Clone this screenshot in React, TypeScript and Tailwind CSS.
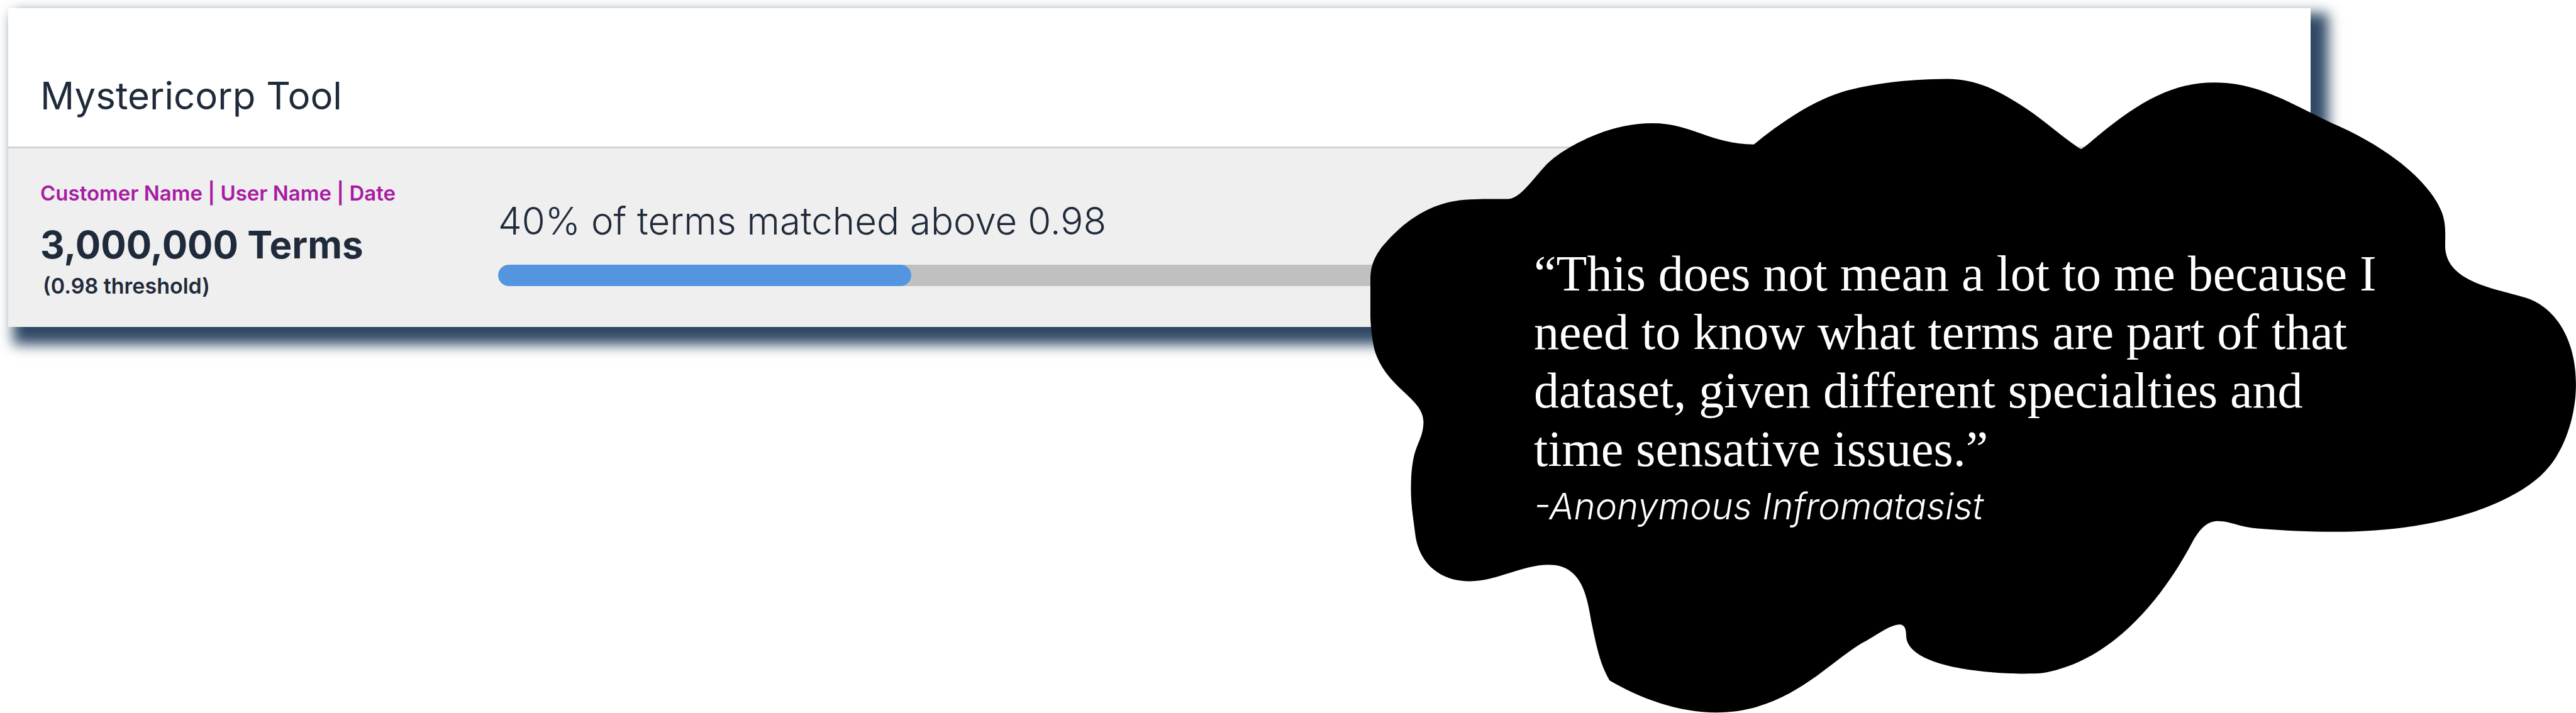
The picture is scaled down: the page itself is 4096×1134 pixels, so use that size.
function SummaryCard() {
  return (
    <section className="col-start-1 row-start-1 mt-[13px] mr-[10.3%] ml-[13px] self-start bg-white text-[#1f2a3a] shadow-[18px_18px_20px_10px_#304a66]">
      <header className="border-b-[3px] border-[#cfd4d8] pt-[103px] pr-[51px] pb-[45px] pl-[51px]">
        <h1 className="text-[60px] leading-[72px] font-normal">Mystericorp Tool</h1>
      </header>
      <div className="flex bg-[#efefef] pt-[51px] pb-[45px] pl-[51px]">
        <div className="w-[728px] shrink-0">
          <p className="text-[33px] leading-[40px] font-semibold text-[#a91ba3]">
            Customer Name | User Name | Date
          </p>
          <p className="mt-[26px] text-[60px] leading-[72px] font-bold">3,000,000 Terms</p>
          <p className="mt-[10px] pl-1 text-[34px] leading-[40px] font-semibold">(0.98 threshold)</p>
        </div>
        <div className="min-w-0 flex-1 pt-7">
          <label htmlFor="matched" className="block text-[60px] leading-[72px] font-light">
            40% of terms matched above 0.98
          </label>
          <progress
            id="matched"
            value={40}
            max={100}
            className="mt-[34px] block h-[34px] w-[57%] appearance-none overflow-hidden rounded-full bg-[#c0c0c0] [&::-webkit-progress-bar]:bg-[#c0c0c0] [&::-webkit-progress-value]:rounded-full [&::-webkit-progress-value]:bg-[#5396df]"
          />
        </div>
      </div>
    </section>
  )
}

const CLOUD_PATH = `
M3139 259
C3195 213 3257 173 3315 160
C3370 147 3430 142 3485 141.6
C3538 142 3577 162 3627 195
C3660 217 3690 245 3722 266
Q3725 268 3728 265
C3738 258 3744 252 3755 243
C3832 180 3890 148 3963 148
C4040 148 4095 183 4172 220
C4260 257 4345 318 4370 380
C4378 402 4376 420 4376 442
C4378 507 4470 517 4519 533
C4575 550 4610 610 4610 688
C4610 745 4590 805 4558 840
C4520 885 4400 952 4179 952
C4130 952 4090 950 4040 946
C4010 944 3990 933 3970 933
C3952 933 3940 943 3925 968
C3895 1025 3805 1180 3655 1205
C3645 1206 3635 1206 3624 1206
C3560 1206 3411 1195 3411.6 1137
C3411.6 1125 3408 1118 3400 1118
C3382 1118 3355 1140 3333 1151
C3270 1188 3200 1275 3072 1275.5
C3005 1275.5 2935 1250 2881 1218
C2864 1190 2857 1155 2849 1116
C2841 1070 2833 1011 2772 1011
C2725 1011 2680 1040 2631 1040.5
C2580 1040.5 2543 1012 2534 962
C2531 935 2525 905 2525.6 872
C2525.6 850 2528 825 2533 809
C2539 790 2548 778 2548 755
C2548 712 2480 695 2460 625
C2450 580 2453 540 2453 497
C2454 473 2461 460 2473 443
C2500 412 2550 357 2640 357
C2660 356 2680 356.5 2700 356.5
C2727 354 2753 305 2779 285
C2810 260 2880 221 2958 221
C3028 221 3060 258 3139 259Z`

function QuoteCloud() {
  return (
    <figure className="z-10 col-start-1 row-start-1 mt-[125px] grid w-[46.8%] self-start justify-self-end text-white">
      <svg
        viewBox="2453 141 2157 1135"
        className="col-start-1 row-start-1 block h-auto w-full"
        fill="black"
        aria-hidden="true"
      >
        <path d={CLOUD_PATH} />
      </svg>
      <div className="col-start-1 row-start-1 pt-[264px] pl-[260px] whitespace-nowrap">
        <blockquote className="font-['Liberation_Serif',serif] text-[80px] leading-[93px]">
          “This does not mean a lot to me because I
          <br />
          need to know what terms are part of that
          <br />
          dataset, given different specialties and
          <br />
          time sensative issues.”
        </blockquote>
        <figcaption className="mt-1 text-[58px] leading-[80px] font-light italic">
          -Anonymous Infromatasist
        </figcaption>
      </div>
    </figure>
  )
}

export default function App() {
  return (
    <main className="grid grid-cols-1 bg-white font-['Inter',sans-serif]">
      <SummaryCard />
      <QuoteCloud />
    </main>
  )
}
